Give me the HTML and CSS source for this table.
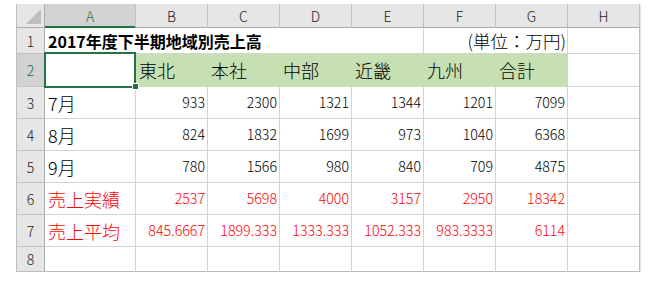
FILE: index.html
```html
<!DOCTYPE html>
<html lang="ja">
<head>
<meta charset="utf-8">
<title>2017年度下半期地域別売上高</title>
<link rel="stylesheet" href="styles.css">
</head>
<body>
<div class="sheet">
  <div class="corner"><span class="tri"></span></div>
  <div class="ch ch-sel">A</div>
  <div class="ch">B</div>
  <div class="ch">C</div>
  <div class="ch">D</div>
  <div class="ch">E</div>
  <div class="ch">F</div>
  <div class="ch">G</div>
  <div class="ch">H</div>

  <div class="rh">1</div>
  <div class="c title span5">2017年度下半期地域別売上高</div>
  <div class="c unit span2">(単位：万円)</div>
  <div class="c e"></div>

  <div class="rh rh-sel">2</div>
  <div class="c sel-cell"><span class="sel-box"></span><span class="handle"></span></div>
  <div class="c g">東北</div>
  <div class="c g">本社</div>
  <div class="c g">中部</div>
  <div class="c g">近畿</div>
  <div class="c g">九州</div>
  <div class="c g">合計</div>
  <div class="c e"></div>

  <div class="rh">3</div>
  <div class="c lbl">7月</div>
  <div class="c num">933</div>
  <div class="c num">2300</div>
  <div class="c num">1321</div>
  <div class="c num">1344</div>
  <div class="c num">1201</div>
  <div class="c num">7099</div>
  <div class="c e"></div>

  <div class="rh">4</div>
  <div class="c lbl">8月</div>
  <div class="c num">824</div>
  <div class="c num">1832</div>
  <div class="c num">1699</div>
  <div class="c num">973</div>
  <div class="c num">1040</div>
  <div class="c num">6368</div>
  <div class="c e"></div>

  <div class="rh">5</div>
  <div class="c lbl">9月</div>
  <div class="c num">780</div>
  <div class="c num">1566</div>
  <div class="c num">980</div>
  <div class="c num">840</div>
  <div class="c num">709</div>
  <div class="c num">4875</div>
  <div class="c e"></div>

  <div class="rh">6</div>
  <div class="c lbl red">売上実績</div>
  <div class="c num red">2537</div>
  <div class="c num red">5698</div>
  <div class="c num red">4000</div>
  <div class="c num red">3157</div>
  <div class="c num red">2950</div>
  <div class="c num red">18342</div>
  <div class="c e"></div>

  <div class="rh">7</div>
  <div class="c lbl red">売上平均</div>
  <div class="c num red">845.6667</div>
  <div class="c num red">1899.333</div>
  <div class="c num red">1333.333</div>
  <div class="c num red">1052.333</div>
  <div class="c num red">983.3333</div>
  <div class="c num red">6114</div>
  <div class="c e"></div>

  <div class="rh b">8</div>
  <div class="c b"></div>
  <div class="c b"></div>
  <div class="c b"></div>
  <div class="c b"></div>
  <div class="c b"></div>
  <div class="c b"></div>
  <div class="c b"></div>
  <div class="c e b"></div>
</div>
</body>
</html>
```
FILE: styles.css
```css
html, body {
  margin: 0;
  padding: 0;
  background: #ffffff;
}

body {
  padding: 4px 0 0 16px;
  font-family: "Noto Sans CJK JP", "Noto Sans", sans-serif;
  color: #000000;
}

.sheet {
  display: grid;
  grid-template-columns: 29px 91px repeat(7, 72px);
  grid-template-rows: 24px 26px 33px repeat(5, 32px) 25px;
  width: 624px;
  box-shadow: 1px 1px 0 #e4e4e4;
}

.sheet > div {
  box-sizing: border-box;
  display: flex;
  align-items: center;
  white-space: nowrap;
  line-height: 1;
}

.corner {
  position: relative;
  background: #e6e6e6;
  border-left: 1px solid #bdbdbd;
  border-right: 1px solid #ababab;
  border-bottom: 1px solid #ababab;
}

.tri {
  position: absolute;
  right: 3px;
  bottom: 3px;
  width: 0;
  height: 0;
  border-left: 15px solid transparent;
  border-bottom: 15px solid #bebebe;
}

.ch {
  justify-content: center;
  background: #e6e6e6;
  border-right: 1px solid #c3c3c3;
  border-bottom: 1px solid #ababab;
  font-size: 14px;
  font-weight: 300;
  color: #222222;
}

.ch:last-of-type {
  border-right-color: #bdbdbd;
}

.ch-sel {
  background: #d2d2d2;
  color: #217346;
  border-bottom-color: #217346;
  box-shadow: inset 0 -1px 0 #217346;
}

.rh {
  justify-content: center;
  background: #e6e6e6;
  border-left: 1px solid #bdbdbd;
  border-right: 1px solid #ababab;
  border-bottom: 1px solid #c3c3c3;
  font-size: 14px;
  font-weight: 300;
  color: #222222;
}

.rh-sel {
  background: #d2d2d2;
  color: #217346;
}

.c {
  position: relative;
  border-right: 1px solid #d4d4d4;
  border-bottom: 1px solid #d4d4d4;
}

.c.e {
  border-right-color: #bdbdbd;
}

.b {
  border-bottom-color: #bdbdbd !important;
}

.span5 {
  grid-column: span 5;
}

.span2 {
  grid-column: span 2;
}

.title {
  padding-left: 3px;
  font-size: 16px;
  font-weight: 700;
}

.unit {
  justify-content: flex-end;
  padding-right: 1px;
  font-size: 17.5px;
  font-weight: 300;
}

.g {
  background: #c6e0b4;
  border-right-color: #c6e0b4;
  border-bottom-color: #c6e0b4;
  padding-left: 3px;
  font-size: 18px;
  font-weight: 300;
}

.lbl {
  padding-left: 3px;
  font-size: 18px;
  font-weight: 300;
}

.num {
  justify-content: flex-end;
  padding-right: 2px;
  font-size: 14.2px;
  font-weight: 300;
}

.red {
  color: #ff0000;
}

.sel-cell {
  z-index: 2;
}

.sel-box {
  position: absolute;
  left: -1px;
  top: -2px;
  width: 92px;
  height: 36px;
  box-sizing: border-box;
  border: 2px solid #217346;
}

.handle {
  position: absolute;
  left: 87px;
  top: 29px;
  width: 7px;
  height: 7px;
  box-sizing: border-box;
  background: #217346;
  border: 1px solid #ffffff;
}
```
